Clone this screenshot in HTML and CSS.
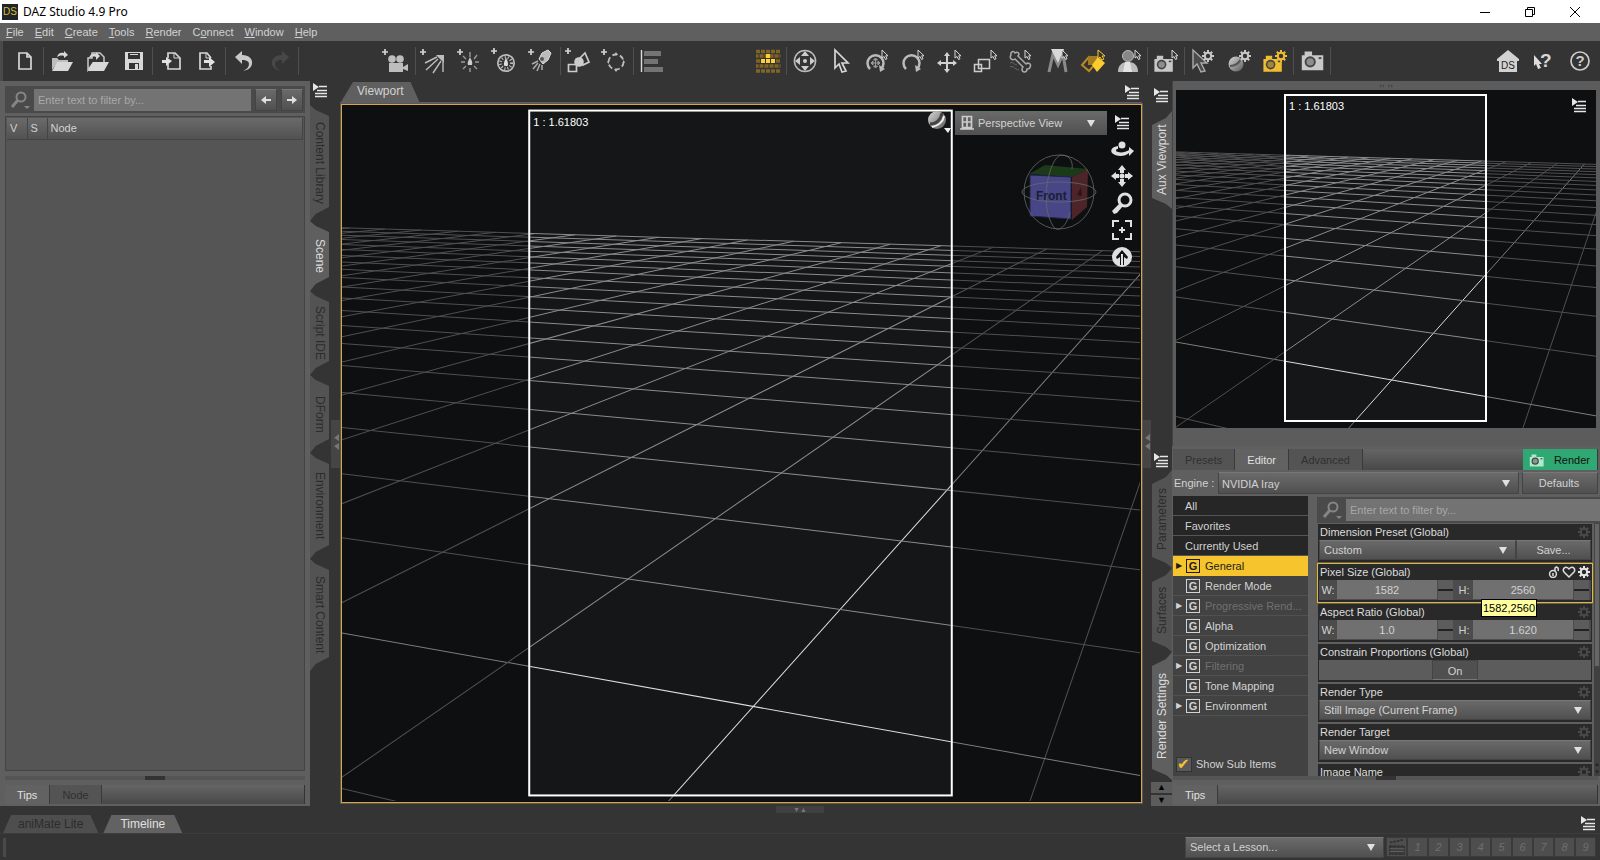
FILE: index.html
```html
<!DOCTYPE html>
<html lang="en">
<head>
<meta charset="utf-8">
<title>DAZ Studio 4.9 Pro</title>
<link rel="stylesheet" href="styles.css">
</head>
<body>
<svg class="sprite" aria-hidden="true">
  <defs>
    <linearGradient id="ball" x1="0" y1="0" x2="1" y2="1"><stop offset="0" stop-color="#d8d8d8"/><stop offset="1" stop-color="#5a5a5a"/></linearGradient>
    <symbol id="i-menu" viewBox="0 0 16 16"><path d="M1 1l6 4-6 4z" fill="#e6e6e6"/><path d="M7 4.500h8M5 8.500h10M3 11.500h12M3 14.500h12" stroke="#e6e6e6" stroke-width="1.300"/></symbol>
    <symbol id="i-cur" viewBox="0 0 8 12"><path d="M1 1v8l2-1.500 1.500 3 1.500-.7-1.300-3H7z" fill="#343434" stroke="#d6d6d6"/></symbol>
    <symbol id="i-plus" viewBox="0 0 7 7"><path d="M3.500 0v7M0 3.500h7" stroke="#d2d2d2" stroke-width="2"/></symbol>
    <symbol id="i-gear" viewBox="0 0 12 12"><circle cx="6" cy="6" r="3.200" fill="none" stroke="currentColor" stroke-width="2"/><path d="M6 0v2.500M6 9.500V12M0 6h2.500M9.500 6H12M1.800 1.800l1.700 1.700M8.500 8.500l1.700 1.700M1.800 10.200l1.700-1.700M8.500 3.500l1.700-1.700" stroke="currentColor" stroke-width="2"/></symbol>
    <symbol id="i-new" viewBox="0 0 30 30"><path d="M9 7h8l4 4v12H9zM17 7v4h4" fill="none" stroke="#d6d6d6" stroke-width="1.700"/></symbol>
    <symbol id="i-open" viewBox="0 0 30 30"><path d="M5 24V12h5l2 2h9v3H10z" fill="#bdbdbd"/><path d="M10 16h16l-5 9H5z" fill="#d8d8d8"/><path d="M10 11c1-4 4-5 7-4V5l4 4-4 3v-2c-3-1-5 0-7 1z" fill="#d8d8d8"/></symbol>
    <symbol id="i-merge" viewBox="0 0 30 30"><path d="M5 24V12h4V7h8l4 4v6H10z" fill="none" stroke="#c9c9c9" stroke-width="1.500"/><path d="M10 16h16l-5 9H5z" fill="#d8d8d8"/><path d="M6 12c1-4 4-5 7-4V6l4 4-4 4v-3c-3-1-5 0-7 1z" fill="#d8d8d8"/></symbol>
    <symbol id="i-save" viewBox="0 0 30 30"><path d="M6 6h18v18H6z" fill="#d8d8d8"/><path d="M9 7h12v6H9zM10 17h10v6H10z" fill="#343434"/><path d="M11 8h8v1h-8zM16 18h3v5h-3z" fill="#d8d8d8"/></symbol>
    <symbol id="i-import" viewBox="0 0 30 30"><path d="M12 12V7h7l5 5v11H12v-5" fill="none" stroke="#d6d6d6" stroke-width="1.700"/><path d="M18 7v5h5" fill="none" stroke="#d6d6d6"/><path d="M6 14h4v-3l6 4-6 5v-3H6z" fill="#e2e2e2"/></symbol>
    <symbol id="i-export" viewBox="0 0 30 30"><path d="M19 12l-4-5H8v16h11v-3" fill="none" stroke="#d6d6d6" stroke-width="1.700"/><path d="M14 7v5h5" fill="none" stroke="#d6d6d6"/><path d="M12 14h5v-3l6 5-6 5v-4h-5z" fill="#e2e2e2"/></symbol>
    <symbol id="i-undo" viewBox="0 0 30 30"><path d="M6 11l7-6v4c7 0 11 4 10 9-1 4-4 6-9 7 4-2 6-4 6-7 0-2-2-4-7-4v4z" fill="currentColor"/></symbol>
    <symbol id="i-camadd" viewBox="0 0 30 30"><use href="#i-plus" x="0" y="3" width="6" height="6"/><g fill="#bdbdbd"><circle cx="10" cy="13" r="3.800"/><circle cx="18" cy="13" r="3.800"/><path d="M7 17h14v9H7zM21 21l5-3v7l-5-2z"/></g></symbol>
    <symbol id="i-distant" viewBox="0 0 30 30"><use href="#i-plus" x="1" y="3" width="6" height="6"/><path d="M17 9h8v8z" fill="#bdbdbd"/><path d="M18 11L6 17M19 13L7 24M22 15l-8 12M24 16v10" stroke="#bdbdbd" stroke-width="1.400"/></symbol>
    <symbol id="i-point" viewBox="0 0 30 30"><use href="#i-plus" x="2" y="3" width="6" height="6"/><path d="M15 6v5M22 9l-3 4M24 16h-4M22 23l-3-3M15 26v-4M8 23l3-3M6 16h4M8 10l3 3" stroke="#999" stroke-width="1.400"/><path d="M15 11c1 3 3 4 2 8h-4c-1-3 1-5 2-8z" fill="#ccc"/></symbol>
    <symbol id="i-photo" viewBox="0 0 30 30"><use href="#i-plus" x="0" y="2" width="6" height="6"/><circle cx="15" cy="17" r="8.200" fill="none" stroke="#bdbdbd" stroke-width="1.700"/><circle cx="15" cy="17" r="5.500" fill="none" stroke="#bdbdbd" stroke-width="3" stroke-dasharray="1 2"/><path d="M15 11c1 4 3 6 1.500 9h-3C12 17 14 15 15 11z" fill="#ddd"/></symbol>
    <symbol id="i-spot" viewBox="0 0 30 30"><use href="#i-plus" x="1" y="3" width="6" height="6"/><path d="M12 13l4 5 5-4 3-7-3-3-6 3z" fill="#bbb" stroke="#ddd"/><circle cx="15" cy="13" r="2" fill="#555"/><path d="M11 15l-6 3M11 17l-5 6M13 18l-3 7M15 19v5" stroke="#aaa" stroke-width="1.500"/></symbol>
    <symbol id="i-prim" viewBox="0 0 30 30"><use href="#i-plus" x="1" y="2" width="6" height="6"/><path d="M4.500 18.500h8v7h-8zM16 12l5-5 4 9-6 3z" fill="none" stroke="#ccc" stroke-width="1.700"/><circle cx="15" cy="16" r="4.800" fill="#ccc"/></symbol>
    <symbol id="i-null" viewBox="0 0 30 30"><use href="#i-plus" x="1" y="3" width="6" height="6"/><circle cx="16" cy="16" r="7.500" fill="none" stroke="#bdbdbd" stroke-width="1.800" stroke-dasharray="5 2.850"/><path d="M14 9l2-3 2 3zM14 23l2 3 2-3zM9 14l-2 2 2 2zM23 14l2 2-2 2z" fill="#bdbdbd"/></symbol>
    <symbol id="i-align" viewBox="0 0 30 30"><path d="M4.500 4v22" stroke="#ddd" stroke-width="1.400"/><path d="M7 5h17v5H7zM7 13h14v5H7zM7 21h19v5H7z" fill="#747474"/></symbol>
    <symbol id="i-brick" viewBox="0 0 30 30"><path d="M3 5.500h24M3 15h24M3 25h24" stroke="#806426" stroke-width="3.600" stroke-dasharray="4 1"/><path d="M3 10h2.500M6.500 10h21M3 20h2.500M6.500 20h21" stroke="#806426" stroke-width="3.600" stroke-dasharray="4 1"/><path d="M13 10h4M8 15h14" stroke="#ffcf31" stroke-width="4" stroke-dasharray="4 1"/></symbol>
    <symbol id="i-univ" viewBox="0 0 30 30"><circle cx="15" cy="15" r="10.600" fill="none" stroke="#bbb" stroke-width="1.500"/><circle cx="15" cy="15" r="2" fill="#ccc"/><path d="M15 5l4 5h-8zM15 25l4-5h-8zM5 15l5-4v8zM25 15l-5-4v8z" fill="#ccc"/></symbol>
    <symbol id="i-select" viewBox="0 0 30 30"><path d="M9 4v18l4-4 3 8 4-1-4-8h6z" fill="none" stroke="#d6d6d6" stroke-width="1.700"/></symbol>
    <symbol id="i-rot" viewBox="0 0 30 30"><path d="M8 23A8 8 0 1 1 19 23" fill="none" stroke="#bbb" stroke-width="2.500"/><path d="M17 19l1 7 5-3z" fill="#bbb"/><use href="#i-cur" x="19" y="3" width="8" height="12"/></symbol>
    <symbol id="i-move" viewBox="0 0 30 30"><path d="M13 9v15M6 17h15" stroke="#d2d2d2" stroke-width="2"/><path d="M13 6l3 4h-6zM13 27l3-4h-6zM3 17l4-3v6zM23 17l-4-3v6z" fill="#d2d2d2"/><use href="#i-cur" x="20" y="3" width="8" height="12"/></symbol>
    <symbol id="i-scale" viewBox="0 0 30 30"><path d="M8.500 13.500h11v9h-11zM4.500 18.500h7v7h-7z" fill="none" stroke="#ccc" stroke-width="1.500"/><use href="#i-cur" x="20" y="3" width="8" height="12"/></symbol>
    <symbol id="i-bone" viewBox="0 0 30 30"><path d="M5 9c-1-3 3-5 4-2 3-2 5 1 3 3l8 8c2-2 6 0 4 3 0 2-2 2-3 2 0 4-5 4-5 0 0-1 0-1 1-2l-8-8c-3 2-6-1-4-4z" fill="none" stroke="#aaa" stroke-width="1.500"/><path d="M4 17c3-2 4 2 7 2M4 21c3-2 4 2 9 3" fill="none" stroke="#666"/><use href="#i-cur" x="18" y="3" width="8" height="12"/></symbol>
    <symbol id="i-joint" viewBox="0 0 30 30"><path d="M7 26l4-18 5 11 5-11 3 18" fill="none" stroke="#8a8a8a" stroke-width="3"/><path d="M9 3h13l-6 14z" fill="#d8d8d8"/><use href="#i-cur" x="19" y="3" width="8" height="12"/></symbol>
    <symbol id="i-surf" viewBox="0 0 30 30"><path d="M4 19l7-8 7 6-7 8z" fill="none" stroke="#b88b22" stroke-width="2"/><path d="M10 10h11v9H10z" fill="#a27b22"/><path d="M14 19l6-8 7 6-8 9z" fill="#fccb2d"/><path d="M20 4v9l2-2 2 3 2-1-2-3h3z" fill="#343434" stroke="#fccb2d"/></symbol>
    <symbol id="i-figure" viewBox="0 0 30 30"><circle cx="14" cy="10" r="5.500" fill="#888" stroke="#bbb"/><path d="M4 26c0-7 4-10 10-10s10 3 10 10z" fill="#bbb"/><path d="M11 16h5l2 10H9z" fill="#e3e3e3"/><use href="#i-cur" x="20" y="3" width="8" height="12"/></symbol>
    <symbol id="i-cam" viewBox="0 0 30 30"><path d="M3 10h3V6h8v4h12v16H3z" fill="currentColor"/><circle cx="12" cy="17" r="6" fill="#454545"/><circle cx="12" cy="17" r="4" fill="currentColor" opacity=".55"/><path d="M21 12h3v2h-3z" fill="#454545"/></symbol>
    <symbol id="i-camcur" viewBox="0 0 30 30"><use href="#i-cam" x="1" y="5" width="24" height="24"/><use href="#i-cur" x="20" y="3" width="8" height="12"/></symbol>
    <symbol id="i-selgear" viewBox="0 0 30 30"><path d="M5 4v18l4-4 4 8 4-1-4-8h6z" fill="#4b4b4b" stroke="#aaa" stroke-width="1.400"/><use href="#i-gear" x="14" y="4" width="12" height="12"/></symbol>
    <symbol id="i-ballgear" viewBox="0 0 30 30"><circle cx="12" cy="18" r="7.500" fill="url(#ball)"/><path d="M6 20c5 0 9-3 11-7" fill="none" stroke="#555" stroke-width="2"/><use href="#i-gear" x="15" y="4" width="12" height="12"/></symbol>
    <symbol id="i-camgear" viewBox="0 0 30 30"><use href="#i-gear" x="15" y="4" width="12" height="12"/><use href="#i-cam" x="1" y="5" width="24" height="24"/></symbol>
    <symbol id="i-search" viewBox="0 0 20 20"><circle cx="11" cy="7" r="4.500" fill="none" stroke="currentColor" stroke-width="2"/><path d="M8 10l-6 7" stroke="currentColor" stroke-width="3"/><path d="M14 16h6l-3 3z" fill="currentColor"/></symbol>
    <symbol id="i-home" viewBox="0 0 30 30"><path d="M15 4l11 9v2h-2v11H6V15H4v-2z" fill="#d2d2d2"/><text x="8" y="23" class="home-ds">DS</text></symbol>
    <symbol id="i-what" viewBox="0 0 30 30"><path d="M5 9v11l2-2 2 5 3-1-2-4h3z" fill="#ddd"/><text x="11" y="21" class="what-q">?</text></symbol>
    <symbol id="i-help" viewBox="0 0 30 30"><circle cx="15" cy="15" r="9" fill="none" stroke="#ccc" stroke-width="1.700"/><text x="15" y="20" text-anchor="middle" class="help-q">?</text></symbol>
  </defs>
</svg>

<header class="titlebar">
  <span class="app-icon">DS</span>
  <h1 class="app-title">DAZ Studio 4.9 Pro</h1>
  <button class="win-btn" aria-label="Minimize"><svg viewBox="0 0 12 12"><path d="M1 6.500h10"/></svg></button>
  <button class="win-btn" aria-label="Restore"><svg viewBox="0 0 12 12"><path d="M1.500 3.500h7v7h-7zM3.500 3.500v-2h7v7h-2"/></svg></button>
  <button class="win-btn" aria-label="Close"><svg viewBox="0 0 12 12"><path d="M1 1l10 10M11 1L1 11"/></svg></button>
</header>

<nav class="menubar">
  <button><u>F</u>ile</button><button><u>E</u>dit</button><button><u>C</u>reate</button><button><u>T</u>ools</button><button><u>R</u>ender</button><button>C<u>o</u>nnect</button><button><u>W</u>indow</button><button><u>H</u>elp</button>
</nav>

<div class="toolbar" role="toolbar" aria-label="Main">
  <div class="tool-group">
    <button aria-label="New"><svg><use href="#i-new"/></svg></button><i></i>
    <button aria-label="Open"><svg><use href="#i-open"/></svg></button>
    <button aria-label="Merge"><svg><use href="#i-merge"/></svg></button>
    <button aria-label="Save"><svg><use href="#i-save"/></svg></button><i></i>
    <button aria-label="Import"><svg><use href="#i-import"/></svg></button>
    <button aria-label="Export"><svg><use href="#i-export"/></svg></button><i></i>
    <button aria-label="Undo"><svg><use href="#i-undo"/></svg></button>
    <button aria-label="Redo" class="redo" disabled><svg><use href="#i-undo"/></svg></button><i></i>
  </div>
  <div class="tool-group">
    <button aria-label="New camera"><svg><use href="#i-camadd"/></svg></button><i></i>
    <button aria-label="New distant light"><svg><use href="#i-distant"/></svg></button>
    <button aria-label="New point light"><svg><use href="#i-point"/></svg></button>
    <button aria-label="New photometric light"><svg><use href="#i-photo"/></svg></button>
    <button aria-label="New spotlight"><svg><use href="#i-spot"/></svg></button><i></i>
    <button aria-label="New primitive"><svg><use href="#i-prim"/></svg></button>
    <button aria-label="New null"><svg><use href="#i-null"/></svg></button><i></i>
    <button aria-label="Align"><svg><use href="#i-align"/></svg></button>
  </div>
  <div class="tool-group">
    <button aria-label="Texture"><svg><use href="#i-brick"/></svg></button><i></i>
    <button aria-label="Universal"><svg><use href="#i-univ"/></svg></button>
    <button aria-label="Select"><svg><use href="#i-select"/></svg></button>
    <button aria-label="Active pose"><svg><use href="#i-rot"/><path d="M9 17h9M13.500 12.500v9M9 17l2-2v4zM18 17l-2-2v4zM13.500 12l-2 2h4zM13.500 22l-2-2h4z" stroke="#999" fill="#999"/></svg></button>
    <button aria-label="Rotate"><svg><use href="#i-rot"/></svg></button>
    <button aria-label="Translate"><svg><use href="#i-move"/></svg></button>
    <button aria-label="Scale"><svg><use href="#i-scale"/></svg></button>
    <button aria-label="Bone"><svg><use href="#i-bone"/></svg></button>
    <button aria-label="Joint editor"><svg><use href="#i-joint"/></svg></button>
    <button aria-label="Surface selection"><svg><use href="#i-surf"/></svg></button>
    <button aria-label="Region navigator"><svg><use href="#i-figure"/></svg></button><i></i>
    <button aria-label="Spot render"><svg><use href="#i-camcur"/></svg></button><i></i>
    <button aria-label="Tool settings"><svg><use href="#i-selgear"/></svg></button>
    <button aria-label="Draw settings"><svg><use href="#i-ballgear"/></svg></button>
    <button aria-label="Render settings" class="gold"><svg><use href="#i-camgear"/></svg></button><i></i>
    <button aria-label="Render"><svg><use href="#i-cam" x="1" y="0" width="30" height="28"/></svg></button><i></i>
  </div>
  <div class="tool-group end">
    <button aria-label="Home"><svg><use href="#i-home"/></svg></button>
    <button aria-label="What's this"><svg><use href="#i-what"/></svg></button>
    <button aria-label="Help"><svg><use href="#i-help"/></svg></button>
  </div>
</div>

<main class="workspace">
  <section class="scene">
    <div class="filter">
      <svg class="search-icon"><use href="#i-search"/></svg>
      <input type="text" placeholder="Enter text to filter by..." aria-label="Filter scene">
      <button class="raised" aria-label="Previous"><svg viewBox="0 0 10 8"><path d="M0 4l5-4v3h5v2H5v3z"/></svg></button>
      <button class="raised" aria-label="Next"><svg viewBox="0 0 10 8"><path d="M10 4L5 0v3H0v2h5v3z"/></svg></button>
    </div>
    <div class="tree">
      <table><thead><tr><th class="narrow">V</th><th class="narrow">S</th><th>Node</th></tr></thead></table>
    </div>
    <div class="grip"></div>
    <div class="tabs"><button class="on">Tips</button><button>Node</button></div>
  </section>

  <nav class="side left">
    <button class="pane-menu" aria-label="Pane menu"><svg><use href="#i-menu"/></svg></button>
    <button class="vtab h116">Content Library</button>
    <button class="vtab h70 on">Scene</button>
    <button class="vtab h84">Script IDE</button>
    <button class="vtab h78">DForm</button>
    <button class="vtab h106">Environment</button>
    <button class="vtab h112">Smart Content</button>
  </nav>
  <div class="edge"><button aria-label="Collapse left"><svg viewBox="0 0 6 16"><path d="M6 0v7L1 4zM6 9v7l-5-4z"/></svg></button></div>

  <section class="center">
    <div class="center-head"><button class="view-tab">Viewport</button><button class="pane-menu" aria-label="Pane menu"><svg><use href="#i-menu"/></svg></button></div>
    <div class="viewport">
      <svg class="scene3d" viewBox="0 0 797 695" preserveAspectRatio="xMidYMid slice">
        <g id="grid-main"></g>
        <path d="M-400-400h1600v1600H-400zM188 6v682h420V6z" fill-rule="evenodd" class="shade"/>
        <rect x="187" y="5" width="422" height="684" class="frame"/>
        <text x="191" y="20" class="ratio">1 : 1.61803</text>
      </svg>
      <button class="draw-style" aria-label="Draw style"><svg viewBox="0 0 24 24"><circle cx="10" cy="10" r="9" fill="url(#ball)"/><path d="M3 14c6 0 11-4 12-11" fill="none" stroke="#444" stroke-width="3"/><path d="M5 17c6-1 11-5 12-11" fill="none" stroke="#eee" stroke-width="2"/><path d="M17 18h7l-3 5z" fill="#eee"/></svg></button>
      <label class="camera-pick"><svg viewBox="0 0 14 16"><path d="M2.500 1.500h9v11h-9zM7 1v11M2 7h10M0 14h14" fill="none" stroke="#ccc" stroke-width="1.700"/></svg><select aria-label="Camera"><option>Perspective View</option></select></label>
      <div class="view-tools">
        <button aria-label="Viewport menu"><svg viewBox="0 0 24 24"><use href="#i-menu" x="4" y="4" width="16" height="16"/></svg></button>
        <button aria-label="Orbit"><svg viewBox="0 0 24 24"><circle cx="12" cy="8" r="3.500"/><path d="M8 9c-6 1-8 4-6 7 4 4 13 4 17 0v3l5-5-5-4v3c-4 3-11 3-13 1 0-2 1-2 2-2z"/></svg></button>
        <button aria-label="Pan"><svg viewBox="0 0 24 24"><circle cx="12" cy="12" r="2.500"/><path d="M12 1l4 5h-2v3h-4V6H8zM12 23l4-5h-2v-3h-4v3H8zM1 12l5-4v2h3v4H6v2zM23 12l-5-4v2h-3v4h3v2z"/></svg></button>
        <button aria-label="Zoom"><svg viewBox="0 0 24 24"><circle cx="15" cy="9" r="6" fill="none" stroke="#e0e0e0" stroke-width="3"/><path d="M10 12l-8 8 2 3 3-1 6-7z"/></svg></button>
        <button aria-label="Frame"><svg viewBox="0 0 24 24"><path d="M3 9V3h6M15 3h6v6M21 15v6h-6M9 21H3v-6M12 9v6M9 12h6" fill="none" stroke="#e0e0e0" stroke-width="2"/></svg></button>
        <button aria-label="Reset"><svg viewBox="0 0 24 24"><circle cx="12" cy="12" r="10"/><path d="M12 5l6 7-1 2-3-2v8h-1V9h-2v11h-1v-8l-3 2-1-2z" fill="#111"/></svg></button>
      </div>
      <svg class="cube" viewBox="0 0 76 76"><path d="M8 20l16-9 43 4-16 8z" fill="#1a3a1a"/><path d="M51 23l16-8-1 38-15 13z" fill="#4d2529"/><path d="M9 21l41 2v42L9 62z" fill="#484687" stroke="#23234a"/><path d="M60 33l-4 8 5 1z" fill="#2b1518"/><g fill="none" stroke="#686868" stroke-width=".8"><ellipse cx="38" cy="38" rx="35" ry="37"/><ellipse cx="38" cy="38" rx="37" ry="10"/><path d="M40 1C28 4 18 50 32 72c5 8 14 0 17-14M40 1c10 0 12 8 11 14"/></g><text x="15" y="46" class="cube-label">Front</text></svg>
    </div>
  </section>

  <div class="edge right-edge"><button aria-label="Collapse right"><svg viewBox="0 0 6 16"><path d="M6 0v7L1 4zM6 9v7l-5-4z"/></svg></button></div>

  <div class="right">
    <nav class="side r">
      <button class="pane-menu" aria-label="Pane menu"><svg><use href="#i-menu"/></svg></button>
      <button class="vtab h98 on">Aux Viewport</button>
    </nav>
    <section class="aux">
      <div class="dots">,, ,,</div>
      <svg class="scene3d" viewBox="0 0 420 338" preserveAspectRatio="xMidYMid slice">
        <g id="grid-aux"></g>
        <path d="M-400-400h1600v1600H-400zM110 6v324h199V6z" fill-rule="evenodd" class="shade"/>
        <rect x="109" y="5" width="201" height="326" class="frame"/>
        <text x="113" y="20" class="ratio">1 : 1.61803</text>
      </svg>
      <button class="aux-menu" aria-label="Aux viewport menu"><svg><use href="#i-menu"/></svg></button>
    </section>

    <nav class="side r">
      <button class="pane-menu" aria-label="Pane menu"><svg><use href="#i-menu"/></svg></button>
      <button class="vtab h98">Parameters</button>
      <button class="vtab h84">Surfaces</button>
      <button class="vtab h128 on">Render Settings</button>
      <div class="spin"><button aria-label="Up">▲</button><button aria-label="Down">▼</button></div>
    </nav>
    <section class="settings">
      <div class="tabs wide"><button>Presets</button><button class="on">Editor</button><button>Advanced</button><span class="fill"></span><button class="render"><svg><use href="#i-cam"/></svg>Render</button></div>
      <div class="engine"><label for="engine">Engine :</label><span class="sel"><select id="engine"><option>NVIDIA Iray</option></select></span><button class="raised">Defaults</button></div>
      <div class="editor">
        <div class="cats">
          <button class="cat dark">All</button>
          <button class="cat dark">Favorites</button>
          <button class="cat dark">Currently Used</button>
          <button class="cat current"><b class="arr">▶</b><b class="g">G</b>General</button>
          <button class="cat"><b class="arr"></b><b class="g">G</b>Render Mode</button>
          <button class="cat dim"><b class="arr">▶</b><b class="g">G</b><span>Progressive Rend...</span></button>
          <button class="cat"><b class="arr"></b><b class="g">G</b>Alpha</button>
          <button class="cat"><b class="arr"></b><b class="g">G</b>Optimization</button>
          <button class="cat dim"><b class="arr">▶</b><b class="g">G</b><span>Filtering</span></button>
          <button class="cat"><b class="arr"></b><b class="g">G</b>Tone Mapping</button>
          <button class="cat"><b class="arr">▶</b><b class="g">G</b>Environment</button>
          <label class="subs"><input type="checkbox" checked><span>Show Sub Items</span></label>
        </div>
        <div class="props">
          <div class="filter"><svg class="search-icon"><use href="#i-search"/></svg><input type="text" placeholder="Enter text to filter by..." aria-label="Filter properties"></div>
          <div class="prop-scroll">
            <div class="prop-list">
              <div class="prop"><div class="ph"><label for="preset">Dimension Preset (Global)</label><svg class="gear"><use href="#i-gear"/></svg></div><div class="pb"><span class="sel"><select id="preset"><option>Custom</option></select></span><button class="raised save">Save...</button></div></div>
              <div class="prop focus"><div class="ph"><span>Pixel Size (Global)</span><svg class="lock" viewBox="0 0 12 12"><circle cx="5" cy="8" r="3.400"/><path d="M7 5V2c2-2 4 0 3 3M5 7v3"/></svg><svg class="heart" viewBox="0 0 14 12"><path d="M7 11L2 6C0 3 3 0 6 2l1 1 1-1c3-2 6 1 4 4z"/></svg><svg class="gear"><use href="#i-gear"/></svg></div>
                <div class="pb"><label for="pw">W:</label><input id="pw" value="1582"><span class="step"></span><label for="phh">H:</label><input id="phh" value="2560"><span class="step"></span></div><div class="tip" role="tooltip">1582,2560</div></div>
              <div class="prop"><div class="ph"><span>Aspect Ratio (Global)</span><svg class="gear"><use href="#i-gear"/></svg></div><div class="pb"><label for="aw">W:</label><input id="aw" value="1.0"><span class="step"></span><label for="ah">H:</label><input id="ah" value="1.620"><span class="step"></span></div></div>
              <div class="prop"><div class="ph"><span>Constrain Proportions (Global)</span><svg class="gear"><use href="#i-gear"/></svg></div><div class="pb toggle"><button>On</button></div></div>
              <div class="prop"><div class="ph"><label for="rtype">Render Type</label><svg class="gear"><use href="#i-gear"/></svg></div><div class="pb"><span class="sel"><select id="rtype"><option>Still Image (Current Frame)</option></select></span></div></div>
              <div class="prop"><div class="ph"><label for="rtarget">Render Target</label><svg class="gear"><use href="#i-gear"/></svg></div><div class="pb"><span class="sel"><select id="rtarget"><option>New Window</option></select></span></div></div>
              <div class="prop"><div class="ph"><span>Image Name</span><svg class="gear"><use href="#i-gear"/></svg></div><div class="pb"></div></div>
            </div>
            <div class="scrollbar"><span class="thumb"></span><span class="ends">▲<br>▼</span></div>
          </div>
        </div>
      </div>
      <div class="grip"></div>
      <div class="tabs"><button class="on">Tips</button></div>
    </section>
  </div>
</main>

<footer class="dock">
  <div class="dock-tabs"><button>aniMate Lite</button><button class="on">Timeline</button><span class="dock-grip">▼▲</span><button class="pane-menu" aria-label="Pane menu"><svg><use href="#i-menu"/></svg></button></div>
  <div class="lesson"><span class="handle"></span><span class="sel"><select aria-label="Lesson"><option>Select a Lesson...</option></select></span>
    <div class="nums"><button class="clap" aria-label="Lesson clip"><svg viewBox="0 0 18 18"><path d="M1 8h16v9H1zM1 4l15-3" stroke="#333" stroke-width="2" fill="#3c3c3c" stroke-dasharray="3 1"/><path d="M1 11h16M1 14h16" stroke="#666"/></svg></button><button>1</button><button>2</button><button>3</button><button>4</button><button>5</button><button>6</button><button>7</button><button>8</button><button>9</button></div>
  </div>
</footer>
<script src="script.js"></script>
</body>
</html>
```

FILE: styles.css
```css
* { box-sizing: border-box; }
body {
  margin: 0;
  height: 100vh;
  display: flex;
  flex-direction: column;
  overflow: hidden;
  background: #343434;
  color: #d2d2d2;
  font: 11px/14px "Liberation Sans", Arial, sans-serif;
}
button, input, select {
  font: inherit;
  color: inherit;
  margin: 0;
  padding: 0;
  border: 0;
  background: none;
  border-radius: 0;
}
.sprite { position: absolute; width: 0; height: 0; }
.home-ds { font: 10px "Liberation Sans", sans-serif; fill: #222; }
.what-q { font: bold 19px "Liberation Sans", sans-serif; fill: #d6d6d6; }
.help-q { font: bold 15px "Liberation Sans", sans-serif; fill: #ccc; }

.titlebar {
  height: 23px;
  flex: none;
  display: flex;
  align-items: center;
  background: #fff;
  color: #000;
  padding: 0 3px 0 2px;
}
.app-icon {
  width: 16px;
  height: 16px;
  background: #1e242a;
  color: #d8bd38;
  font: 10px/16px "Liberation Sans", sans-serif;
  text-align: center;
}
.app-title { flex: 1; margin: 0 0 0 5px; font: 12px/16px "Noto Sans", "Open Sans", sans-serif; }
.win-btn { width: 45px; height: 22px; }
.win-btn svg { width: 12px; height: 12px; fill: none; stroke: #000; display: block; margin: 0 auto; }

.menubar { height: 18px; flex: none; display: flex; gap: 11px; padding-left: 6px; background: #5f5f5f; }
.menubar button { line-height: 18px; }

.toolbar { height: 40px; flex: none; display: flex; gap: 80px; padding: 0 2px 0 4px; border-left: 3px solid #4a4a4a; }
.tool-group { display: flex; align-items: center; }
.tool-group.end { margin-left: auto; }
.tool-group button { width: 36px; height: 36px; color: #c8c8c8; }
.tool-group svg { width: 30px; height: 30px; display: block; margin: 0 auto; }
.tool-group i { width: 1px; height: 28px; background: #505050; }
.tool-group .redo { color: #484848; transform: scaleX(-1); }
.tool-group .gold { color: #efbd31; }

.workspace { flex: 1; min-height: 0; display: grid; grid-template-columns: 310px 21px 9px minmax(0, 1fr) 9px 449px; grid-template-rows: minmax(0, 1fr); }

.scene { display: flex; flex-direction: column; background: #5f5f5f; padding: 5px 5px 2px; }
.filter { height: 27px; flex: none; display: flex; align-items: center; gap: 4px; padding: 0 2px 0 5px; background: #4a4a4a; }
.filter input { flex: 1; min-width: 0; height: 22px; padding: 0 4px; background: #737373; }
.filter input::placeholder { color: #a8a8a8; opacity: 1; }
.search-icon { width: 20px; height: 20px; color: #858585; flex: none; }
.filter .raised { width: 22px; height: 22px; }
.filter .raised svg { width: 10px; height: 8px; fill: #e0e0e0; }
.raised, .sel { background: linear-gradient(#6a6a6a, #505050); border: 1px solid #444; border-top-color: #777; }
.tree { flex: 1; margin-top: 3px; background: #555; border: 1px solid #444; padding: 1px; }
.tree table { width: 100%; border-collapse: collapse; table-layout: fixed; }
.tree th { height: 21px; padding: 0 3px; text-align: left; font-weight: normal; background: linear-gradient(#6a6a6a, #525252); border: 1px solid #444; border-width: 0 1px 1px 0; }
.tree .narrow { width: 20px; }
.grip { height: 4px; flex: none; margin: 5px 0; background: linear-gradient(#333, #333) center / 20px 4px no-repeat #555; }
.tabs { height: 19px; flex: none; display: flex; background: linear-gradient(#656565, #484848); border-right: 1px solid #333; }
.tabs button { padding: 0 12px; color: #303030; border-right: 1px solid #3a3a3a; background: #545454; }
.tabs .on { background: #626262; color: #e0e0e0; }

.side { display: flex; flex-direction: column; background: #343434; }
.pane-menu { width: 21px; height: 21px; flex: none; }
.pane-menu svg { width: 16px; height: 16px; display: block; margin: 0 auto; }
.left .pane-menu { height: 17px; margin-bottom: 7px; }
.left .pane-menu svg { margin: 0 2px; }
.vtab {
  width: 19px;
  padding: 0;
  writing-mode: vertical-rl;
  font-size: 12px;
  text-align: center;
  color: #2c2c2c;
  background: #535353;
  clip-path: polygon(0 0, 30% 5px, 100% 11px, 100% calc(100% - 14px), 30% calc(100% - 7px), 0 100%);
}
.vtab.on { background: #5f5f5f; color: #dcdcdc; }
.r .vtab { transform: rotate(180deg); margin-left: 1px; width: 20px; }
.h70 { height: 70px; }
.h78 { height: 78px; }
.h84 { height: 84px; }
.h98 { height: 98px; }
.h106 { height: 106px; }
.h112 { height: 112px; }
.h116 { height: 116px; }
.h128 { height: 128px; }
.spin { margin-top: auto; display: flex; flex-direction: column; gap: 2px; }
.spin button { height: 11px; font-size: 9px; line-height: 9px; color: #000; background: #5c5c5c; }

.edge { display: flex; align-items: center; }
.edge button { width: 9px; height: 48px; background: #454545; }
.edge svg { width: 6px; height: 16px; fill: #777; }

.center { display: flex; flex-direction: column; min-width: 0; }
.center-head { height: 22px; flex: none; display: flex; justify-content: space-between; align-items: flex-end; border-bottom: 1px solid #606060; }
.view-tab { height: 20px; margin-left: 1px; padding: 0 16px 2px; font-size: 12px; background: #5f5f5f; clip-path: polygon(12px 0, calc(100% - 9px) 0, 100% 100%, 0 100%); }
.viewport { position: relative; flex: 1; min-height: 0; margin: 1px 0 3px 1px; padding: 1px 1px 1px 0; border: 1px solid #d6aa3a; box-shadow: 0 0 0 1px #5c5560; background: #0d0d0f; }
.scene3d { display: block; width: 100%; height: 100%; background: #151618; }
.grid-line { stroke: #8c8c8e; stroke-width: 1; fill: none; }
.grid-axis { stroke: #dedede; stroke-width: 1; }
.shade { fill: rgba(6, 6, 7, 0.45); }
.frame { fill: none; stroke: #fff; stroke-width: 2; }
.ratio { fill: #fff; font: 11px "Liberation Sans", sans-serif; }
.draw-style { position: absolute; top: 5px; right: 190px; width: 24px; height: 24px; }
.draw-style svg { width: 24px; height: 24px; display: block; }
.camera-pick { position: absolute; top: 6px; right: 34px; width: 152px; height: 24px; display: flex; align-items: center; padding-left: 5px; background: linear-gradient(#6a6a6a, #505050); }
.camera-pick svg { width: 14px; height: 16px; flex: none; }
select { appearance: none; flex: 1; width: 100%; height: 100%; padding-left: 4px; }
.sel { position: relative; }
.sel::after, .camera-pick::after { content: ""; position: absolute; right: 8px; top: calc(50% - 3px); border: 4px solid transparent; border-top: 7px solid #e0e0e0; border-bottom: 0; pointer-events: none; }
.camera-pick::after { right: 12px; }
.view-tools { position: absolute; top: 5px; right: 7px; display: flex; flex-direction: column; gap: 3px; }
.view-tools button { width: 24px; height: 24px; }
.view-tools svg { width: 24px; height: 24px; display: block; fill: #e0e0e0; }
.cube { position: absolute; top: 49px; right: 44px; width: 76px; height: 76px; }
.cube-label { font: bold 12px "Liberation Sans", sans-serif; fill: #1d1d38; }

.right { display: grid; grid-template-columns: 21px minmax(0, 1fr); grid-template-rows: 365px minmax(0, 1fr); }
.right .side { padding-top: 3px; }
.right .side .pane-menu { padding-right: 2px; }
.right .side:first-child .pane-menu { margin-bottom: 6px; }
.aux { position: relative; display: flex; flex-direction: column; background: #5c5c5c; padding: 0 4px 18px 3px; border-left: 1px solid #444; }
.dots { height: 9px; line-height: 4px; text-align: center; color: #333; font-size: 10px; flex: none; }
.aux .scene3d { flex: 1; min-height: 0; }
.aux-menu { position: absolute; top: 16px; right: 13px; width: 16px; height: 16px; }
.aux-menu svg { width: 16px; height: 16px; display: block; }

.settings { display: flex; flex-direction: column; background: #5f5f5f; padding: 3px 2px 2px 1px; min-height: 0; }
.settings .grip { margin: 0 0 5px; }
.tabs.wide { height: 21px; border: 0; }
.wide .fill { flex: 1; }
.tabs .render { width: 75px; display: flex; align-items: center; justify-content: space-between; padding: 0 7px 0 5px; background: #2fa873; color: #101010; }
.render svg { width: 18px; height: 18px; color: #aeeacb; }
.engine { height: 22px; flex: none; display: flex; gap: 3px; margin: 2px 0; line-height: 22px; }
.engine label { width: 42px; padding-left: 1px; }
.engine .sel { flex: 1; }
.engine select { padding-left: 3px; }
.engine .raised { width: 76px; padding-right: 2px; line-height: 20px; }
.editor { flex: 1; min-height: 0; display: flex; gap: 9px; }
.cats { width: 135px; flex: none; display: flex; flex-direction: column; background: #424242; }
.cat { height: 20px; flex: none; display: flex; align-items: center; gap: 5px; padding: 0 4px 0 3px; border-bottom: 1px solid #505050; text-align: left; white-space: nowrap; }
.cat.dark { background: #262626; padding-left: 12px; border-color: #555; }
.cat.current { background: #f6c42c; color: #1c1c1c; border-color: #f6c42c; }
.cat.dim span { color: #707070; }
.arr { width: 6px; flex: none; font: 8px/12px "DejaVu Sans", sans-serif; margin-right: -1px; }
.g { width: 14px; height: 14px; flex: none; border: 1px solid currentColor; font-size: 11px; line-height: 12px; text-align: center; }
.subs { margin-top: auto; height: 24px; display: flex; align-items: center; gap: 4px; padding-left: 3px; }
.subs input { appearance: none; width: 16px; height: 15px; background: #595959; border: 1px solid #333; }
.subs input:checked::before { content: "✔"; display: block; color: #f6c42c; font: 15px/13px "DejaVu Sans", sans-serif; }
.props { flex: 1; min-width: 0; display: flex; flex-direction: column; margin-right: -2px; }
.props .filter { margin-top: 1px; height: 26px; padding: 0 0 0 5px; }
.prop-scroll { flex: 1; min-height: 0; display: flex; gap: 2px; overflow: hidden; }
.prop-list { flex: 1; min-width: 0; }
.prop { position: relative; height: 38px; margin: 1px 0 2px 1px; padding: 0 1px; background: #292929; }
.prop + .prop { margin-top: 0; }
.prop.focus { outline: 1px solid #e5b92f; }
.ph { height: 16px; display: flex; align-items: center; gap: 2px; color: #dcdcdc; padding: 0 1px; }
.ph > :first-child { flex: 1; }
.ph svg { width: 12px; height: 12px; }
.ph .heart { width: 14px; }
.gear { color: #494949; }
.focus .gear { color: #e6e6e6; }
.lock, .heart { fill: none; stroke: #ddd; stroke-width: 1.5px; }
.pb { height: 20px; display: flex; background: #4c4c4c; }
.pb .sel { flex: 1; }
.pb .save { width: 75px; }
.pb label { width: 18px; text-align: center; line-height: 20px; }
.pb input { flex: 1; min-width: 0; height: 19px; background: #707070; text-align: center; }
.step { width: 15px; margin: 0 2px 0 1px; background: linear-gradient(#5c5c5c 9px, #222 9px, #222 11px, #5c5c5c 11px); }
.toggle { justify-content: center; background: #5c5c5c; }
.toggle button { width: 46px; padding-top: 2px; background: #505050; border: 1px solid #444; border-bottom-color: #777; }
.tip { position: absolute; z-index: 2; top: 35px; right: 55px; width: 56px; height: 18px; line-height: 16px; text-align: center; background: #ffff9e; color: #000; border: 1px solid #000; }
.scrollbar { width: 6px; display: flex; flex-direction: column; justify-content: space-between; background: #404040; }
.thumb { height: 144px; background: #666; border: 1px solid #444; }
.ends { font-size: 6px; line-height: 8px; color: #222; }

.dock { height: 54px; flex: none; }
.dock-tabs { height: 28px; display: flex; align-items: flex-end; gap: 5px; padding: 0 2px 0 3px; border-bottom: 1px solid #3c3c3c; position: relative; }
.dock-tabs > button { height: 18px; font-size: 12px; padding: 0 15px; color: #2c2c2c; background: #4e4e4e; clip-path: polygon(8px 0, calc(100% - 8px) 0, 100% 100%, 0 100%); }
.dock-tabs > .on { background: #626262; color: #e0e0e0; padding: 0 17px; }
.dock-tabs > .pane-menu { margin-left: auto; padding: 0; background: none; clip-path: none; height: 20px; }
.dock-grip { position: absolute; left: calc(50% - 24px); top: 0; width: 48px; height: 7px; background: #404040; color: #777; font-size: 7px; line-height: 7px; text-align: center; }
.lesson { height: 26px; display: flex; align-items: center; padding: 0 4px 0 3px; gap: 2px; }
.handle { width: 3px; height: 19px; background: #4a4a4a; margin-right: auto; }
.lesson .sel { width: 199px; height: 21px; }
.nums { display: flex; }
.nums button { width: 21px; height: 20px; color: #6f6f6f; font-style: italic; background: #4e4e4e; border: 1px solid #3a3a3a; }
.clap svg { width: 16px; height: 16px; display: block; margin: 0 auto; }
```

FILE: script.js
```js
// Ground plane: 20 cells each way from the origin, projected with one
// plane-to-screen matrix per camera.
const REACH = 20;

function drawGrid(id, cam) {
  const group = document.getElementById(id);
  const depth = (i, j) => cam.g * i + cam.h * j + 1;
  const project = (i, j) => {
    const w = depth(i, j);
    return [
      (cam.a * i + cam.b * j + cam.c) / w / cam.scaleX - cam.left,
      (cam.d * i + cam.e * j + cam.f) / w / cam.scaleY - cam.top
    ];
  };
  const line = (from, to, axis) => {
    const [x1, y1] = project(...from);
    const [x2, y2] = project(...to);
    const el = document.createElementNS("http://www.w3.org/2000/svg", "line");
    Object.entries({ x1, y1, x2, y2 }).forEach(([k, v]) => el.setAttribute(k, v.toFixed(1)));
    el.setAttribute("class", axis ? "grid-axis" : "grid-line");
    group.appendChild(el);
  };
  const near = 0.1;
  for (let n = -4; n <= REACH; n++) {
    const j0 = Math.max(-REACH, (near - 1 - cam.g * n) / cam.h);
    line([n, j0], [n, REACH], n === 0);
    const i0 = Math.max(-REACH, (near - 1 - cam.h * n) / cam.g);
    line([i0, n], [REACH, n], n === 0);
  }
}

drawGrid("grid-main", {
  a: -453.1, b: 373.6, c: 809, d: -11.6, e: -29.7, f: 1280,
  g: 0.085, h: 0.208, scaleX: 1.96, scaleY: 2.529, left: 2, top: -94
});
drawGrid("grid-aux", {
  a: -326.8, b: 292.5, c: 665, d: 7.1, e: 17.9, f: 885,
  g: 0.084, h: 0.212, scaleX: 3, scaleY: 3, left: 6, top: 5
});
```
